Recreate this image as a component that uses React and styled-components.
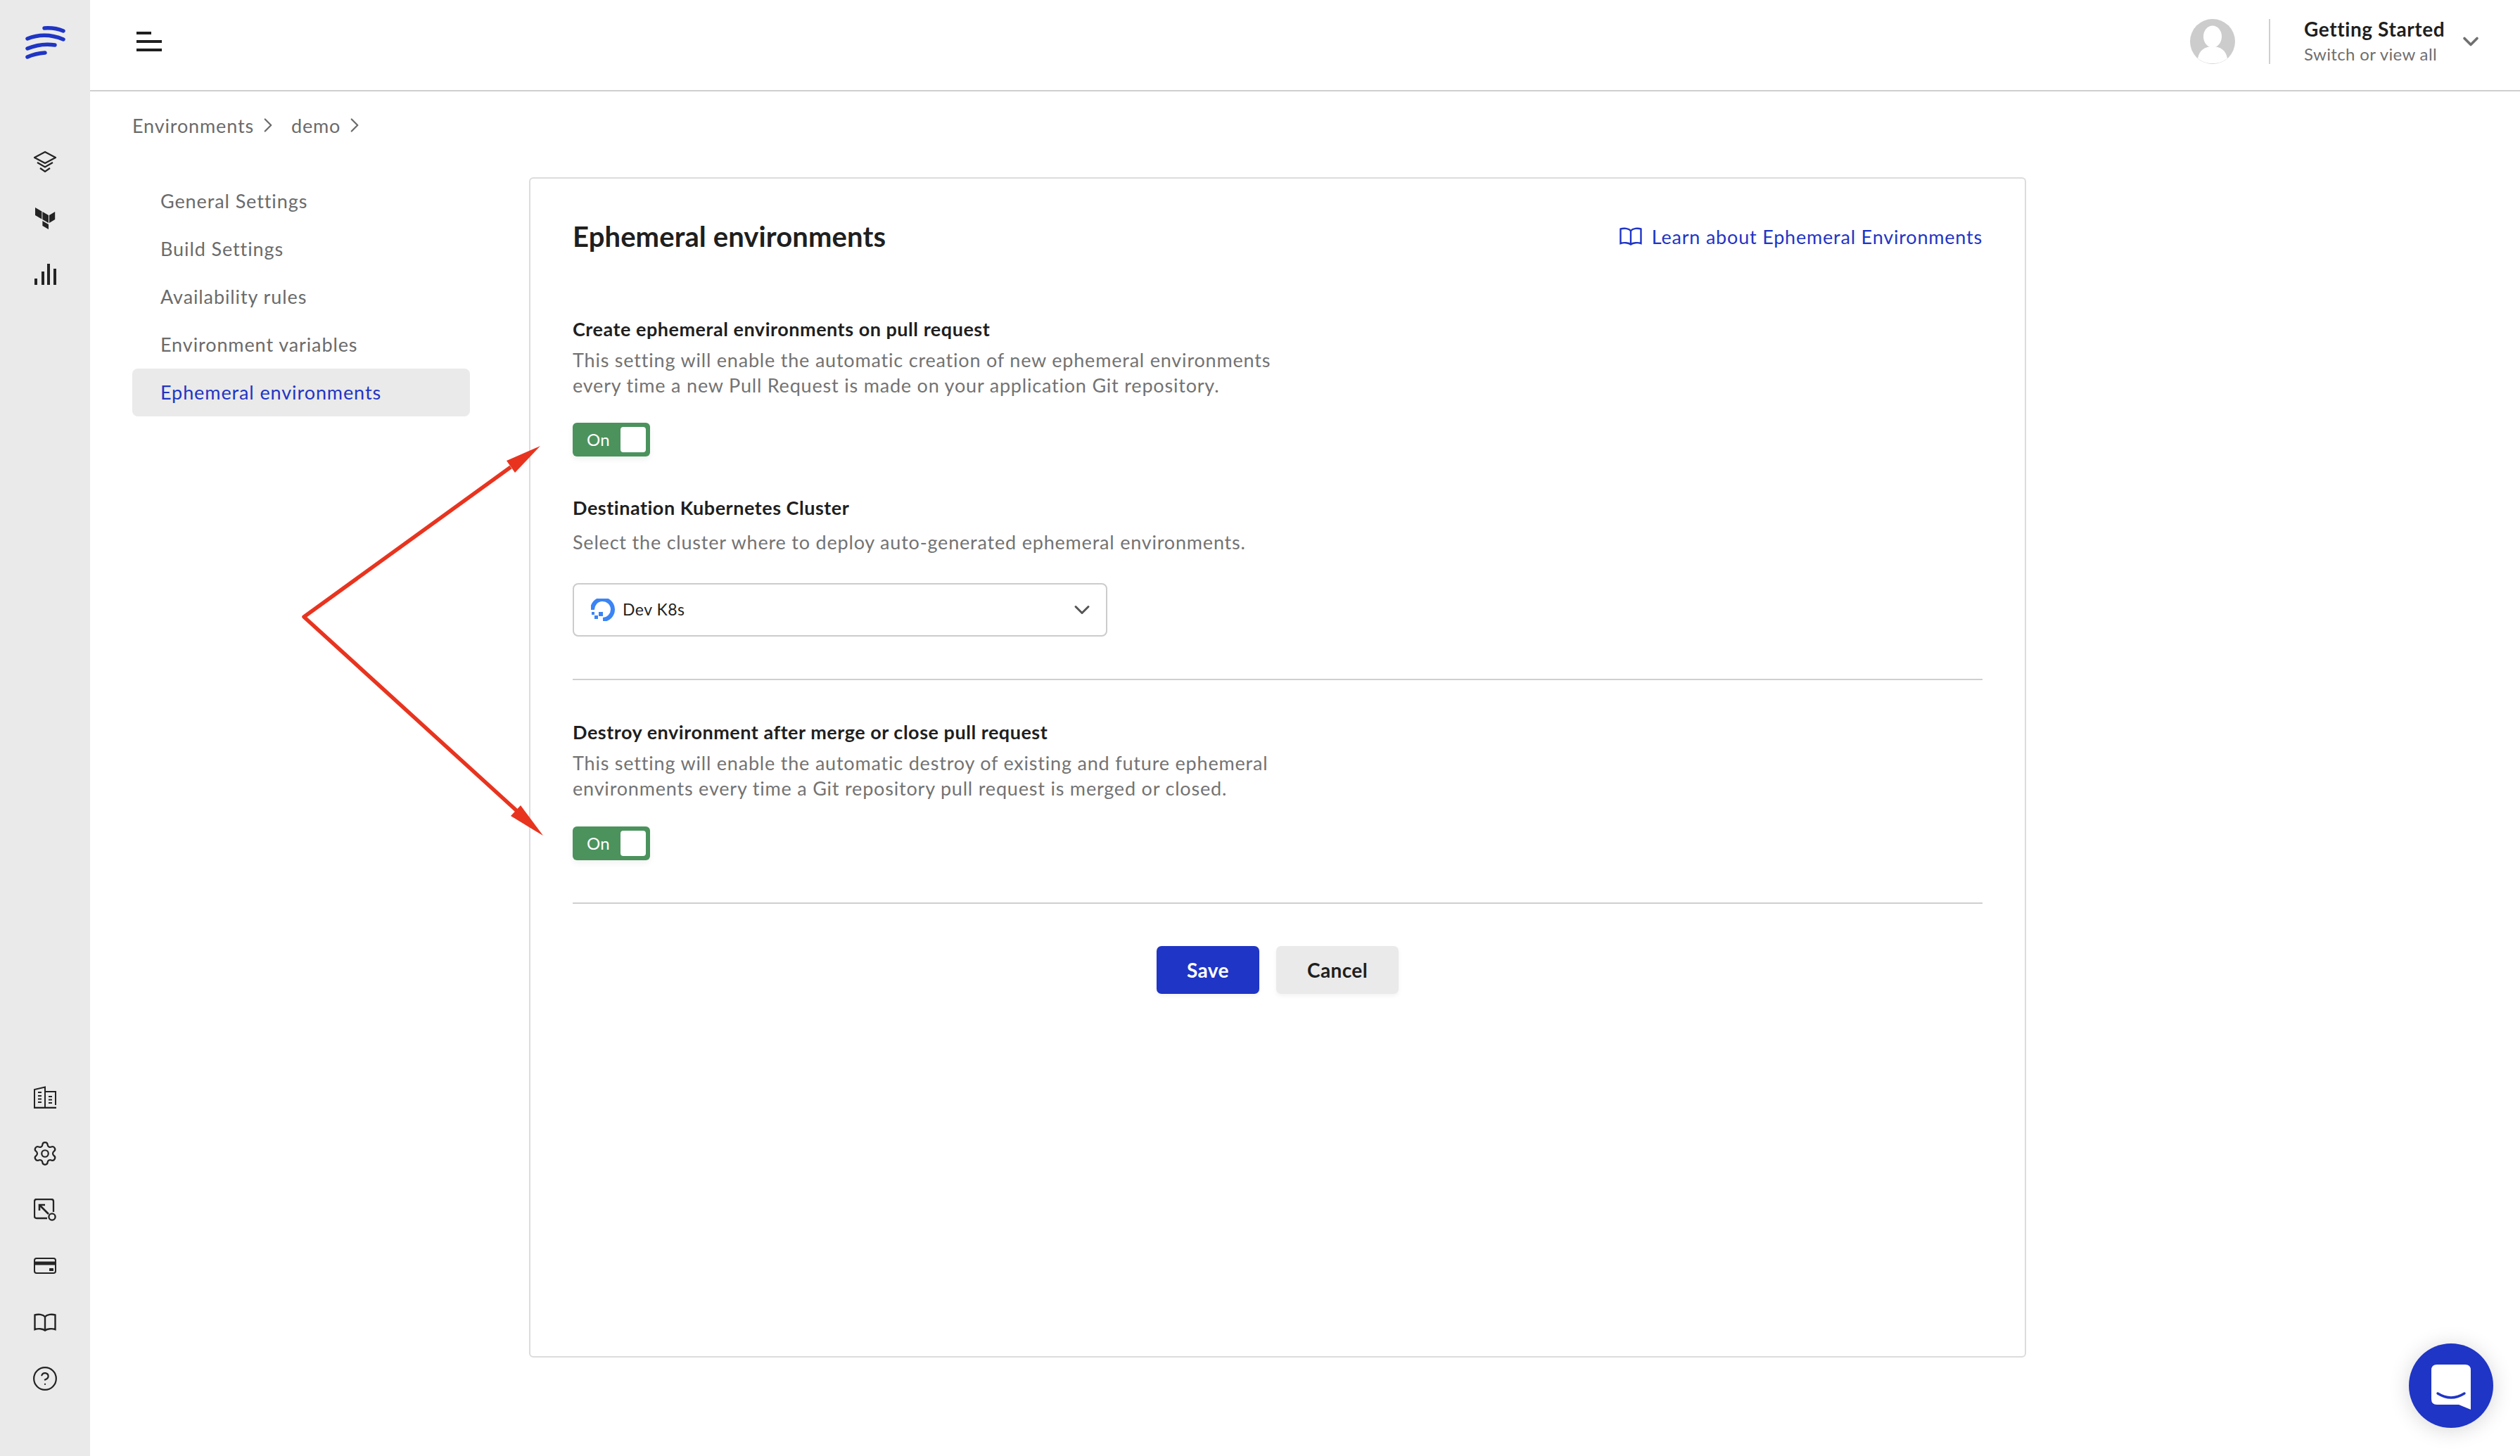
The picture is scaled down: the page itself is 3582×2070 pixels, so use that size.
import React from "react";
import styled, { createGlobalStyle } from "styled-components";
import { Settings, CircleHelp, ChevronDown, ChevronRight } from "lucide-react";

const Global = createGlobalStyle`
  html, body { margin: 0; padding: 0; background: #fff; }
  body { font-family: "Lato", "Liberation Sans", sans-serif; color: #1f1f1f; overflow: hidden; }
  * { box-sizing: border-box; }
`;

const Page = styled.div`
  position: relative;
  display: flex;
  width: 3582px;
  height: 2070px;
`;
const Rail = styled.aside`
  width: 128px;
  flex: none;
  background: #eaeaea;
  display: flex;
  flex-direction: column;
  align-items: center;
  padding: 36px 0 94px;
`;
const RailGroup = styled.div`
  display: flex;
  flex-direction: column;
  gap: 48px;
  margin-top: ${(p) => p.$top || 0};
  &:last-child { margin-top: auto; }
`;
const RailIcon = styled.div`
  width: 32px;
  height: 32px;
  display: flex;
  align-items: center;
  justify-content: center;
  color: #242424;
  svg { display: block; flex: none; }
`;
const Main = styled.div`
  flex: 1;
  display: flex;
  flex-direction: column;
  min-width: 0;
`;
const Header = styled.header`
  height: 130px;
  flex: none;
  border-bottom: 2px solid #cfcfcf;
  display: flex;
  align-items: center;
  padding: 0 52px 10px 66px;
`;
const Burger = styled.div`
  width: 36px;
  display: flex;
  flex-direction: column;
  gap: 8px;
`;
const BurgerBar = styled.span`
  display: block;
  height: 4px;
  background: #1f1f1f;
  width: ${(p) => p.$w}px;
`;
const HeaderRight = styled.div`
  margin-left: auto;
  display: flex;
  align-items: center;
  svg { flex: none; }
`;
const Avatar = styled.svg`
  width: 64px;
  height: 64px;
  display: block;
`;
const VRule = styled.div`
  width: 2px;
  height: 64px;
  background: #cfcfcf;
  margin: 0 48px;
`;
const Org = styled.div`
  width: 219px;
  display: flex;
  flex-direction: column;
`;
const OrgName = styled.div`
  font-size: 28px;
  font-weight: 700;
  line-height: 36px;
  letter-spacing: 0.6px;
  white-space: nowrap;
`;
const OrgSub = styled.div`
  font-size: 24px;
  line-height: 36px;
  color: #6f6f6f;
  letter-spacing: 0.35px;
  white-space: nowrap;
`;
const Body = styled.div`
  padding: 30px 0 0 60px;
  display: flex;
  flex-direction: column;
`;
const Crumbs = styled.nav`
  display: flex;
  align-items: center;
  height: 36px;
  font-size: 27px;
  color: #6b6b6b;
  letter-spacing: 0.85px;
`;
const Crumb = styled.span`
  display: inline-flex;
  align-items: center;
  gap: 3px;
  margin-right: 16px;
  svg { display: block; flex: none; }
`;
const Columns = styled.div`
  display: flex;
  gap: 84px;
  margin-top: 56px;
`;
const SideNav = styled.nav`
  width: 480px;
  flex: none;
  display: flex;
  flex-direction: column;
`;
const SideItem = styled.div`
  height: 68px;
  display: flex;
  align-items: center;
  padding: 0 0 2px 40px;
  font-size: 27px;
  letter-spacing: 0.9px;
  border-radius: 8px;
  color: ${(p) => (p.$active ? "#1f35c5" : "#6b6b6b")};
  background: ${(p) => (p.$active ? "#eaeaea" : "transparent")};
`;
const Card = styled.section`
  width: 2128px;
  height: 1678px;
  border: 2px solid #dcdcdc;
  border-radius: 6px;
  padding: 54px 60px 0;
  display: flex;
  flex-direction: column;
`;
const CardHead = styled.div`
  display: flex;
  align-items: center;
  justify-content: space-between;
  height: 56px;
  margin-bottom: 87px;
`;
const CardTitle = styled.h1`
  margin: 0;
  font-size: 40px;
  font-weight: 700;
  letter-spacing: 0.1px;
  color: #1f1f1f;
`;
const LearnLink = styled.a`
  display: inline-flex;
  align-items: center;
  gap: 14px;
  font-size: 27px;
  color: #1f35c5;
  letter-spacing: 0.8px;
  svg { display: block; flex: none; }
`;
const SectionTitle = styled.h2`
  margin: ${(p) => p.$top || 0}px 0 0;
  font-size: 27px;
  line-height: 36px;
  font-weight: 700;
  color: #1f1f1f;
  letter-spacing: 0.52px;
  position: relative;
  top: -1px;
`;
const Desc = styled.p`
  margin: ${(p) => p.$top || 8}px 0 0;
  font-size: 27px;
  line-height: 36px;
  color: #737373;
  letter-spacing: 0.8px;
  white-space: nowrap;
  position: relative;
  top: -1px;
`;
const Toggle = styled.div`
  width: 110px;
  height: 48px;
  margin-top: ${(p) => p.$top}px;
  border-radius: 6px;
  background: #4b925d;
  display: flex;
  align-items: center;
  justify-content: space-between;
  padding: 0 6px 0 20px;
  box-shadow: 0 4px 8px rgba(0, 0, 0, 0.06);
`;
const ToggleLabel = styled.span`
  color: #fff;
  font-size: 24px;
  letter-spacing: 0.4px;
  position: relative;
  top: -1px;
`;
const Knob = styled.span`
  width: 36px;
  height: 36px;
  background: #fff;
  border-radius: 4px;
`;
const Select = styled.div`
  width: 760px;
  height: 76px;
  margin-top: 39px;
  border: 2px solid #cccccc;
  border-radius: 8px;
  display: flex;
  align-items: center;
  padding: 0 16px 0 24px;
  svg { display: block; flex: none; }
`;
const SelectText = styled.span`
  margin-left: 11px;
  font-size: 23px;
  color: #1f1f1f;
  letter-spacing: 0.5px;
  flex: 1;
  position: relative;
  top: -1px;
`;
const Rule = styled.hr`
  width: 100%;
  height: 2px;
  border: 0;
  background: #cfcfcf;
  margin: ${(p) => p.$top}px 0 ${(p) => p.$bottom}px;
`;
const Actions = styled.div`
  display: flex;
  justify-content: center;
  gap: 24px;
`;
const Button = styled.button`
  height: 68px;
  width: ${(p) => p.$w}px;
  border: 0;
  border-radius: 7px;
  font-family: inherit;
  font-size: 28px;
  font-weight: 700;
  letter-spacing: 0.4px;
  color: ${(p) => (p.$primary ? "#fff" : "#1f1f1f")};
  background: ${(p) => (p.$primary ? "#1f35c5" : "#eaeaea")};
  box-shadow: 0 3px 6px rgba(0, 0, 0, 0.05);
`;
const Arrows = styled.svg`
  position: absolute;
  left: 400px;
  top: 600px;
  width: 400px;
  height: 620px;
`;
const Chat = styled.div`
  position: absolute;
  left: 3424px;
  top: 1910px;
  width: 120px;
  height: 120px;
  border-radius: 50%;
  background: #1f35c5;
  box-shadow: 0 3px 30px rgba(0, 0, 0, 0.16);
  display: flex;
  align-items: center;
  justify-content: center;
  svg { display: block; margin-top: 4px; }
`;

const Logo = () => (
  <svg width="57" height="48" viewBox="0 0 57 48" fill="none" stroke="#1f35c5" strokeWidth="5.5" strokeLinecap="round" style={{ display: "block" }}>
    <path d="M27 4 Q42 3 54 8" />
    <path d="M3 19 Q28 9 54 20" />
    <path d="M3 33 Q22 25 42 28" />
    <path d="M3 45 Q14 40 28 39" />
  </svg>
);
const LayersIcon = () => (
  <svg width="32" height="32" viewBox="0 0 32 32" fill="none" stroke="currentColor" strokeWidth="2.2">
    <path d="M16 2 L31 10 L16 18 L1 10 Z" />
    <path d="M5 17 L16 23.5 L27 17" />
    <path d="M9 25 L16 30 L23 25" />
  </svg>
);
const TerraformIcon = () => (
  <svg width="32" height="32" viewBox="0 0 32 32" fill="currentColor">
    <path d="M2 1 L11.4 6.5 L11.4 17.5 L2 12 Z" />
    <path d="M12.4 7 L21 12 L21 23 L12.4 18 Z" />
    <path d="M22 12 L30.2 7 L30.2 18 L22 23 Z" />
    <path d="M12.4 20 L21 25 L21 32 L12.4 27 Z" />
  </svg>
);
const ChartIcon = () => (
  <svg width="32" height="32" viewBox="0 0 32 32" fill="currentColor">
    <rect x="1" y="22" width="4" height="9" />
    <rect x="11" y="12" width="4" height="19" />
    <rect x="19" y="1" width="4" height="30" />
    <rect x="28" y="8" width="4" height="23" />
  </svg>
);
const BuildingIcon = () => (
  <svg width="32" height="32" viewBox="0 0 32 32" fill="none" stroke="currentColor" strokeWidth="2">
    <path d="M1 31 V5 L16 1.5 V31" />
    <path d="M17 8 H31 V27" />
    <path d="M0 31 H32" strokeWidth="2.6" />
    <path d="M6 9 H11 M6 14 H11 M6 18.5 H11 M6 23 H11 M21 15 H26 M21 19.5 H26 M21 24 H26" />
  </svg>
);
const ExportIcon = () => (
  <svg width="32" height="32" viewBox="0 0 32 32" fill="none" stroke="currentColor" strokeWidth="2.3">
    <path d="M19 28 H4 Q1 28 1 25 V4 Q1 1 4 1 H25 Q28 1 28 4 V19" />
    <path d="M8 9 L21 22" strokeWidth="2.6" />
    <path d="M8 17 V9 H16" strokeWidth="2.6" />
    <circle cx="26" cy="26" r="4.6" />
  </svg>
);
const CardIcon = () => (
  <svg width="32" height="24" viewBox="0 0 32 24" fill="none" stroke="currentColor" strokeWidth="2">
    <rect x="1" y="1" width="30" height="21" rx="3" />
    <rect x="1" y="5.5" width="30" height="5" fill="currentColor" stroke="none" />
    <rect x="22" y="15" width="6" height="4" rx="0.5" fill="currentColor" stroke="none" />
  </svg>
);
const BookIcon = ({ color = "currentColor" }) => (
  <svg width="32" height="26" viewBox="0 0 32 26" fill="none" stroke={color} strokeWidth="2.4">
    <path d="M16 5 C13 1.5 6 1 1.5 2.5 V23 C6 21.5 13 22 16 24.5 C19 22 26 21.5 30.5 23 V2.5 C26 1 19 1.5 16 5 Z" />
    <path d="M16 5 V24" />
  </svg>
);
const AvatarArt = () => (
  <Avatar viewBox="0 0 64 64">
    <circle cx="32" cy="32" r="32" fill="#cccccc" />
    <ellipse cx="32" cy="25" rx="13" ry="15.5" fill="#fff" />
    <path d="M11 56 C13 44 22 39 32 39 C42 39 51 44 53 56 C47 61 40 63.2 32 63.2 C24 63.2 17 61 11 56 Z" fill="#fff" />
  </Avatar>
);
const DOLogo = () => (
  <svg width="34" height="32" viewBox="0 0 34 32" fill="none">
    <path d="M2 16 A14.5 14.5 0 1 1 17 30" stroke="#3a84f6" strokeWidth="6" />
    <rect x="11" y="19" width="6" height="6" fill="#3a84f6" />
    <rect x="5" y="24" width="5" height="5" fill="#3a84f6" />
    <rect x="1" y="19" width="4" height="4" fill="#3a84f6" />
  </svg>
);
const ChatGlyph = () => (
  <svg width="56" height="64" viewBox="0 0 56 64">
    <path d="M8 0 H48 Q56 0 56 8 V64 L39 57 H8 Q0 57 0 49 V8 Q0 0 8 0 Z" fill="#fff" />
    <path d="M9 41 Q28 53 47 41" fill="none" stroke="#1f35c5" strokeWidth="3.4" strokeLinecap="round" />
  </svg>
);

const sections = ["General Settings", "Build Settings", "Availability rules", "Environment variables", "Ephemeral environments"];

export default function App() {
  return (
    <>
      <Global />
      <Page>
        <Rail>
          <Logo />
          <RailGroup $top="130px">
            <RailIcon><LayersIcon /></RailIcon>
            <RailIcon><TerraformIcon /></RailIcon>
            <RailIcon><ChartIcon /></RailIcon>
          </RailGroup>
          <RailGroup>
            <RailIcon><BuildingIcon /></RailIcon>
            <RailIcon><Settings size={38} strokeWidth={1.4} /></RailIcon>
            <RailIcon><ExportIcon /></RailIcon>
            <RailIcon><CardIcon /></RailIcon>
            <RailIcon><BookIcon /></RailIcon>
            <RailIcon><CircleHelp size={38} strokeWidth={1.4} /></RailIcon>
          </RailGroup>
        </Rail>
        <Main>
          <Header>
            <Burger>
              <BurgerBar $w={21} />
              <BurgerBar $w={36} />
              <BurgerBar $w={36} />
            </Burger>
            <HeaderRight>
              <AvatarArt />
              <VRule />
              <Org>
                <OrgName>Getting Started</OrgName>
                <OrgSub>Switch or view all</OrgSub>
              </Org>
              <ChevronDown size={36} strokeWidth={2.4} color="#6f6f6f" />
            </HeaderRight>
          </Header>
          <Body>
            <Crumbs>
              <Crumb>Environments <ChevronRight size={34} strokeWidth={1.6} /></Crumb>
              <Crumb>demo <ChevronRight size={34} strokeWidth={1.6} /></Crumb>
            </Crumbs>
            <Columns>
              <SideNav>
                {sections.map((s, i) => (
                  <SideItem key={s} $active={i === sections.length - 1}>{s}</SideItem>
                ))}
              </SideNav>
              <Card>
                <CardHead>
                  <CardTitle>Ephemeral environments</CardTitle>
                  <LearnLink>
                    <BookIcon color="#1f35c5" />
                    Learn about Ephemeral Environments
                  </LearnLink>
                </CardHead>
                <SectionTitle>Create ephemeral environments on pull request</SectionTitle>
                <Desc>
                  This setting will enable the automatic creation of new ephemeral environments
                  <br />
                  every time a new Pull Request is made on your application Git repository.
                </Desc>
                <Toggle $top={34}><ToggleLabel>On</ToggleLabel><Knob /></Toggle>
                <SectionTitle $top={56}>Destination Kubernetes Cluster</SectionTitle>
                <Desc $top={13}>Select the cluster where to deploy auto-generated ephemeral environments.</Desc>
                <Select>
                  <DOLogo />
                  <SelectText>Dev K8s</SelectText>
                  <ChevronDown size={36} strokeWidth={2} color="#555" />
                </Select>
                <Rule $top={60} $bottom={57} />
                <SectionTitle>Destroy environment after merge or close pull request</SectionTitle>
                <Desc>
                  This setting will enable the automatic destroy of existing and future ephemeral
                  <br />
                  environments every time a Git repository pull request is merged or closed.
                </Desc>
                <Toggle $top={35}><ToggleLabel>On</ToggleLabel><Knob /></Toggle>
                <Rule $top={60} $bottom={60} />
                <Actions>
                  <Button $primary $w={146}>Save</Button>
                  <Button $w={174}>Cancel</Button>
                </Actions>
              </Card>
            </Columns>
          </Body>
        </Main>
        <Arrows viewBox="0 0 400 620">
          <path d="M326 64 L32 277 L336 554" fill="none" stroke="#e8341f" strokeWidth="5.5" strokeLinejoin="round" />
          <path d="M368 34 L320 55 L332 72 Z" fill="#e8341f" />
          <path d="M372 588 L340 545 L326 560 Z" fill="#e8341f" />
        </Arrows>
        <Chat><ChatGlyph /></Chat>
      </Page>
    </>
  );
}
